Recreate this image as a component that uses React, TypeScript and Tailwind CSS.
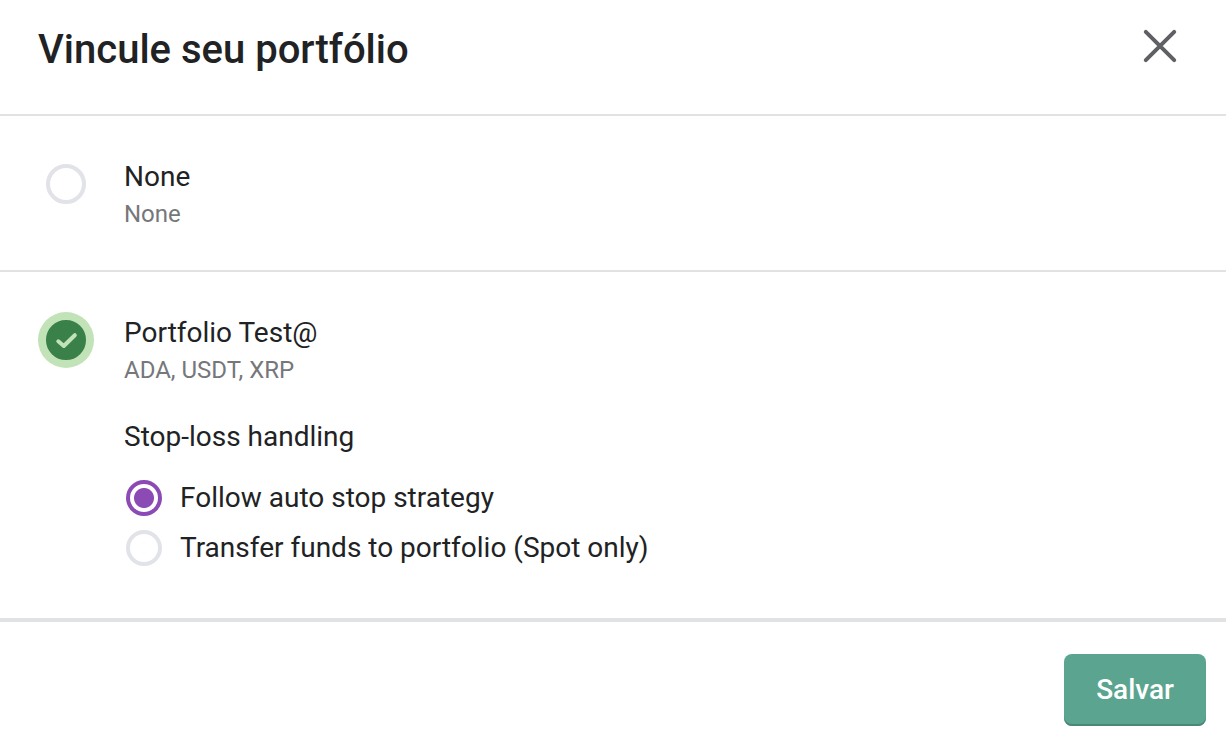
import { useState } from 'react';

const radioClass =
  'm-0 shrink-0 appearance-none rounded-full border-4 border-[#e1e3e8] bg-white';

export default function App() {
  const [portfolio, setPortfolio] = useState('test');
  const [handling, setHandling] = useState('follow');

  return (
    <form
      aria-labelledby="dialog-title"
      onSubmit={(event) => event.preventDefault()}
      className="flex min-h-screen flex-col bg-white font-['Roboto',sans-serif] text-[28px] leading-[42px] text-[#212224]"
    >
      <header className="flex items-start justify-between border-b-2 border-[#e2e2e3] pt-[22px] pr-[42px] pb-9 pl-[38px]">
        <h1 id="dialog-title" className="text-[40px] leading-[56px] font-medium">
          Vincule seu portfólio
        </h1>
        <button type="button" aria-label="Fechar" className="text-[#5f6063]">
          <svg width="48" height="48" viewBox="0 0 48 48" fill="none" stroke="currentColor" strokeWidth="4" strokeLinecap="round">
            <path d="M9.8 9.8 38.2 38.2M38.2 9.8 9.8 38.2" />
          </svg>
        </button>
      </header>

      <section className="flex gap-[30px] border-b-2 border-[#e1e2e4] px-[38px] py-10">
        <div className="grid size-14 shrink-0 place-items-center">
          <input
            id="portfolio-none"
            type="radio"
            name="portfolio"
            checked={portfolio === 'none'}
            onChange={() => setPortfolio('none')}
            className={`${radioClass} size-10 checked:border-[#3a8049] checked:bg-[#3a8049]`}
          />
        </div>
        <label htmlFor="portfolio-none" className="flex flex-col">
          <span>None</span>
          <span className="text-[24px] leading-[32px] text-[#76777a]">None</span>
        </label>
      </section>

      <section className="flex gap-[30px] border-b-4 border-[#e1e2e4] px-[38px] pt-10 pb-[45px]">
        <label className="grid size-14 shrink-0 cursor-pointer place-items-center rounded-full has-checked:bg-[#c1e3b7]">
          <input
            id="portfolio-test"
            type="radio"
            name="portfolio"
            aria-label="Portfolio Test@"
            checked={portfolio === 'test'}
            onChange={() => setPortfolio('test')}
            className={`${radioClass} peer col-start-1 row-start-1 size-10 checked:border-[#3a8049] checked:bg-[#3a8049]`}
          />
          <svg
            className="pointer-events-none col-start-1 row-start-1 hidden peer-checked:block"
            width="40"
            height="40"
            viewBox="0 0 40 40"
            fill="none"
            stroke="#c1e3b7"
            strokeWidth="4"
            strokeLinecap="round"
            strokeLinejoin="round"
          >
            <path d="M12.3 21.3 17.8 26 28.8 15.2" />
          </svg>
        </label>
        <div>
          <label htmlFor="portfolio-test" className="flex flex-col">
            <span>Portfolio Test@</span>
            <span className="text-[24px] leading-[32px] text-[#76777a]">ADA, USDT, XRP</span>
          </label>
          <fieldset className="mt-[30px]">
            <legend>Stop-loss handling</legend>
            <div className="flex flex-col pt-[15px] pl-[2px]">
              <label className="flex h-[50px] items-center gap-[18px]">
                <input
                  type="radio"
                  name="handling"
                  checked={handling === 'follow'}
                  onChange={() => setHandling('follow')}
                  className={`${radioClass} size-9 checked:border-[#8c4ab5] checked:bg-[radial-gradient(circle,#8c4ab5_9.5px,white_10.5px)]`}
                />
                Follow auto stop strategy
              </label>
              <label className="flex h-[50px] items-center gap-[18px]">
                <input
                  type="radio"
                  name="handling"
                  checked={handling === 'transfer'}
                  onChange={() => setHandling('transfer')}
                  className={`${radioClass} size-9 checked:border-[#8c4ab5] checked:bg-[radial-gradient(circle,#8c4ab5_9.5px,white_10.5px)]`}
                />
                Transfer funds to portfolio (Spot only)
              </label>
            </div>
          </fieldset>
        </div>
      </section>

      <footer className="flex justify-end px-5 pt-8 pb-2">
        <button
          type="submit"
          className="h-[72px] rounded-lg bg-[#5ba490] px-8 font-medium text-white shadow-[inset_0_-2px_0_#4a8776]"
        >
          Salvar
        </button>
      </footer>
    </form>
  );
}
